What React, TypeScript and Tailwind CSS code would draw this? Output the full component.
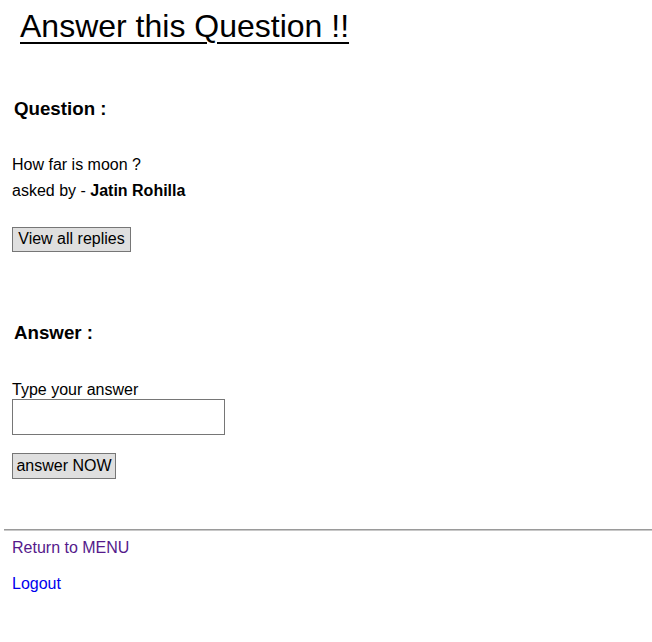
export default function App() {
  return (
    <div className="min-h-[642px] bg-white font-['Liberation_Sans',Arial,sans-serif] text-black pl-[12px]">
      <h1 className="pt-[8px] ml-[8px] text-[32px] leading-[37px] font-normal underline decoration-2 underline-offset-[5px]">
        Answer this Question !!
      </h1>

      <h3 className="mt-[53px] ml-[2px] text-[18.72px] leading-[22px] font-bold">Question :</h3>

      <p className="mt-[32px] text-[16px] leading-[26px]">How far is moon ?</p>
      <p className="text-[16px] leading-[26px]">
        asked by - <b>Jatin Rohilla</b>
      </p>

      <button className="mt-[23px] w-[119px] h-[25px] pb-[2px] bg-[#dfdfdf] border border-[#767676] text-[16px] leading-[18px] text-black flex items-center justify-center">
        View all replies
      </button>

      <h3 className="mt-[70px] ml-[2px] text-[18.72px] leading-[22px] font-bold">Answer :</h3>

      <p className="mt-[37px] text-[16px] leading-[18px]">Type your answer</p>
      <input type="text" className="block w-[213px] h-[36px] border border-[#767676] bg-white outline-none px-[2px] text-[16px]" />

      <button className="mt-[18px] w-[104px] h-[26px] bg-[#dfdfdf] border border-[#767676] text-[16px] leading-[18px] text-black flex items-center justify-center">
        answer NOW
      </button>

      <hr className="mt-[50px] -ml-[8px] border-0 border-t border-b border-t-[#9a9a9a] border-b-[#c8c8c8]" />

      <div className="mt-[8px] text-[16px] leading-[18px]">
        <a href="#" className="text-[#551A8B]">Return to MENU</a>
      </div>
      <div className="mt-[18px] text-[16px] leading-[18px]">
        <a href="#" className="text-[#0000EE]">Logout</a>
      </div>
    </div>
  )
}
